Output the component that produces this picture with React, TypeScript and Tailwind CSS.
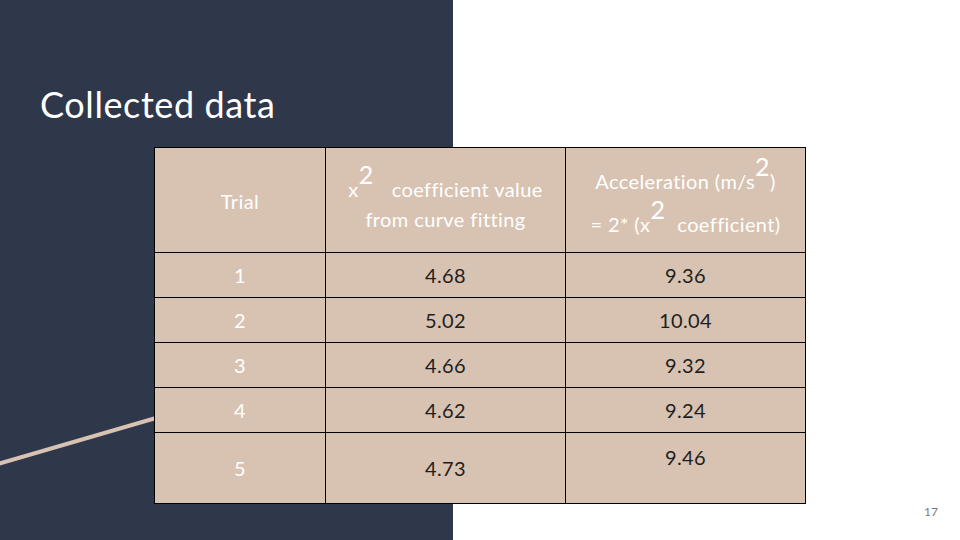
import React from "react";

const rows = [
  { t: "1", c: "4.68", a: "9.36" },
  { t: "2", c: "5.02", a: "10.04" },
  { t: "3", c: "4.66", a: "9.32" },
  { t: "4", c: "4.62", a: "9.24" },
];

function Sup() {
  return <span className="relative -top-[13px] text-[25px] leading-none">2</span>;
}

export default function App() {
  return (
    <div
      className="relative w-[960px] h-[540px] bg-white overflow-hidden"
      style={{ fontFamily: "Lato, 'Noto Sans', sans-serif", fontVariantLigatures: "none" }}
    >
      <div className="absolute left-0 top-0 w-[453px] h-full bg-[#2f374a]" />
      <svg className="absolute left-0 top-0" width="960" height="540">
        <line x1="-2" y1="464" x2="300" y2="376" stroke="#d8c3b2" strokeWidth="4" />
      </svg>

      <div className="relative flex flex-col pt-[86px]">
        <h1 className="pl-[40px] text-[36px] leading-none text-white font-normal tracking-[0.6px]">Collected data</h1>
        <table className="mt-[25px] ml-[154px] w-[651px] border-collapse table-fixed bg-[#d8c3b2] text-[20px] tracking-[0.4px]">
          <colgroup>
            <col className="w-[171px]" />
            <col className="w-[240px]" />
            <col className="w-[240px]" />
          </colgroup>
          <tbody>
            <tr className="h-[105px] text-white">
              <td className="border border-black text-center align-middle pt-[2px]">Trial</td>
              <td className="border border-black text-center align-middle leading-[30px]">
                <div className="pt-[8px] whitespace-nowrap">
                  <span>x</span>
                  <Sup />
                  <span className="ml-[18px]">coefficient value</span>
                </div>
                <div>from curve fitting</div>
              </td>
              <td className="border border-black text-center align-middle leading-[44px]">
                <div className="pt-[4px] whitespace-nowrap">
                  Acceleration (m/s<Sup />)
                </div>
                <div className="-mt-[1px] whitespace-nowrap">
                  = 2* (x<Sup />
                  <span className="ml-[12px]">coefficient)</span>
                </div>
              </td>
            </tr>
            {rows.map((r) => (
              <tr key={r.t} className="h-[45px]">
                <td className="border border-black text-center align-middle text-white">{r.t}</td>
                <td className="border border-black text-center align-middle text-[#1e1e1e]">{r.c}</td>
                <td className="border border-black text-center align-middle text-[#1e1e1e]">{r.a}</td>
              </tr>
            ))}
            <tr className="h-[71px]">
              <td className="border border-black text-center align-middle text-white">5</td>
              <td className="border border-black text-center align-middle text-[#1e1e1e]">4.73</td>
              <td className="border border-black text-center align-top pt-[9px] text-[#1e1e1e]">9.46</td>
            </tr>
          </tbody>
        </table>
      </div>

      <div className="absolute right-[22px] top-[503px] text-[12px] text-[#7d7d7d]">17</div>
    </div>
  );
}
